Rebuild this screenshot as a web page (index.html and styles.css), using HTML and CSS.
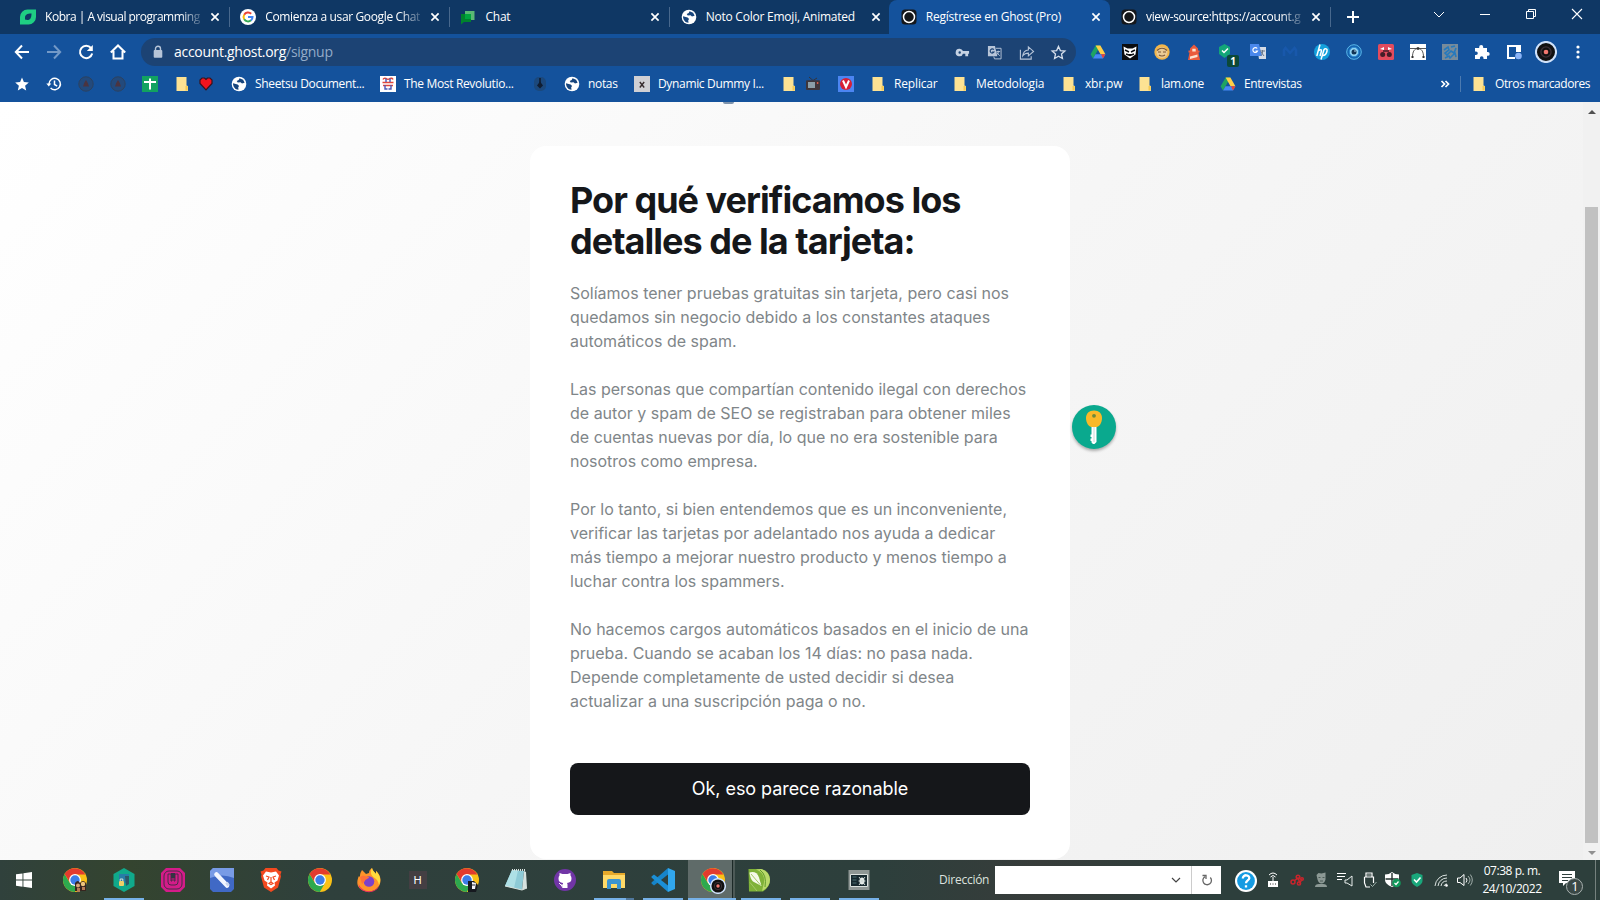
FILE: index.html
```html
<!DOCTYPE html>
<html lang="es">
<head>
<meta charset="utf-8">
<title>Regístrese en Ghost (Pro)</title>
<link rel="stylesheet" href="styles.css">
</head>
<body>
<svg class="defs" aria-hidden="true">
  <symbol id="close" viewBox="0 0 10 10"><path d="M1.4 1.4l7.2 7.2M8.6 1.4L1.4 8.6" stroke="#fff" stroke-width="1.7"/></symbol>
  <symbol id="globe" viewBox="0 0 16 16"><circle cx="8" cy="8" r="7.3" fill="#fff"/><path d="M2 7.2l4.6 1.2 1.5 1.5-.9 1.3.3 2.5c-3 .1-5.600-2.800-5.500-6.500zM8.500 2.200l3.600 1.500 1.500 3-2.600.8-1.500-1.200-2.800.2-1-1.500 2-1z" fill="#17457d"/></symbol>
  <symbol id="folder" viewBox="0 0 16 16"><path d="M2.500 1h10v8.500l1.500.5v5H2.500z" fill="#fde293"/><path d="M11.500 10v4.500h2.200V10z" fill="#f4c952"/></symbol>
  <symbol id="ghost" viewBox="0 0 16 16"><rect x=".5" y=".5" width="15" height="15" rx="3.500" fill="#15171a"/><circle cx="8" cy="8" r="5.500" fill="none" stroke="#fff" stroke-width="1.500"/></symbol>
  <symbol id="drive" viewBox="0 0 16 16"><path d="M5.600 1.500h4.800L5.500 10.200 3 14.500.6 10.300z" fill="#1ea362"/><path d="M5.600 1.500h4.800l5 8.700h-4.900z" fill="#ffcf48"/><path d="M5.500 10.200h9.900L13 14.500H3z" fill="#4688f4"/><path d="M11 10.200h4.400L13 14.500z" fill="#ea4335"/></symbol>
  <symbol id="chrome" viewBox="0 0 24 24"><circle cx="12" cy="12" r="12" fill="#fbc116"/><path d="M1.600 6l5.300 9L12 12l5 3-5.200 9A12 12 0 0 1 1.600 6z" fill="#2da94f"/><path d="M1.600 6A12 12 0 0 1 22.400 6.600H12L7 14.500z" fill="#e33b2e"/><circle cx="12" cy="12" r="5.900" fill="#fff"/><circle cx="12" cy="12" r="4.700" fill="#3c7de8"/></symbol>
  <symbol id="badge" viewBox="0 0 16 16"><circle cx="8" cy="8" r="7.300" fill="#111" stroke="#cfe2fb" stroke-width="1.500"/><circle cx="8" cy="8" r="3.700" fill="none" stroke="#3b3037"/><circle cx="8" cy="8" r="1.700" fill="#f2776f"/></symbol>
  <symbol id="camo" viewBox="0 0 16 16"><circle cx="8" cy="8" r="7.200" fill="#234a7c" stroke="#2c4260"/><path d="M8 4l1.800 3L11 10.500H5L6.200 7z" fill="#4b3440"/></symbol>
</svg>

<header class="browser">
  <div class="tabs">
    <div class="tab"><svg class="fav" viewBox="0 0 16 16"><path d="M0 15.500V8a7.500 7.500 0 0 1 7.500-7.500H16V8a7.500 7.500 0 0 1-7.500 7.500z" fill="#1fce83"/><path d="M5 10.500V8.500C5 6 7 4.500 11.500 4.500c0 4.500-1.500 6.500-4 6.500z" fill="#0f3764"/></svg><span class="title fade tight">Kobra | A visual programming</span><svg class="x"><use href="#close"/></svg></div>
    <div class="tab sep"><svg class="fav" viewBox="0 0 16 16"><circle cx="8" cy="8" r="8" fill="#fff"/><g fill="none" stroke-width="2"><path d="M4.200 5.800A4.500 4.500 0 0 1 11.200 4.800" stroke="#ea4335"/><path d="M4.200 10.300a4.500 4.500 0 0 1 0-4.600" stroke="#fbbc05"/><path d="M11 11.300a4.500 4.500 0 0 1-6.800-1" stroke="#34a853"/><path d="M8 8h4.500a4.500 4.500 0 0 1-1.500 3.400" stroke="#4285f4"/></g></svg><span class="title fade">Comienza a usar Google Chat</span><svg class="x"><use href="#close"/></svg></div>
    <div class="tab sep"><svg class="fav" viewBox="0 0 16 16"><path d="M5 2h9.500v9H5z" fill="#5bb974"/><path d="M1 5h10v8H4l-3 2.500z" fill="#00832d"/><path d="M5 5h6v5H5z" fill="#00a63e"/></svg><span class="title">Chat</span><svg class="x"><use href="#close"/></svg></div>
    <div class="tab sep"><svg class="fav"><use href="#globe"/></svg><span class="title">Noto Color Emoji, Animated</span><svg class="x"><use href="#close"/></svg></div>
    <div class="tab active"><svg class="fav"><use href="#ghost"/></svg><span class="title">Regístrese en Ghost (Pro)</span><svg class="x"><use href="#close"/></svg></div>
    <div class="tab"><svg class="fav"><use href="#ghost"/></svg><span class="title fade">view-source:https://account.g</span><svg class="x"><use href="#close"/></svg></div>
    <div class="newtab"><svg width="12" height="12" viewBox="0 0 12 12"><path d="M6 0v12M0 6h12" stroke="#fff" stroke-width="2"/></svg></div>
    <div class="winbtns">
      <svg viewBox="0 0 12 12"><path d="M1 4l5 5 5-5" fill="none" stroke="#fff"/></svg>
      <svg viewBox="0 0 12 12"><path d="M1 6.500h10" stroke="#fff"/></svg>
      <svg viewBox="0 0 12 12"><path d="M1.500 3.500h7v7h-7zM3.500 3V1.500h7v7H9" fill="none" stroke="#fff"/></svg>
      <svg viewBox="0 0 12 12"><path d="M1 1l10 10M11 1L1 11" stroke="#fff" stroke-width="1.100"/></svg>
    </div>
  </div>

  <div class="toolbar">
    <span class="cell"><svg viewBox="0 0 16 16"><path d="M15 8H2M8 1.500L1.800 8 8 14.500" fill="none" stroke="#fff" stroke-width="2"/></svg></span>
    <span class="cell"><svg viewBox="0 0 16 16"><path d="M1 8h13M8 1.500L14.200 8 8 14.500" fill="none" stroke="#7399c7" stroke-width="2"/></svg></span>
    <span class="cell"><svg viewBox="0 0 16 16"><path d="M13 4A6.200 6.200 0 1 0 14.200 9.500" fill="none" stroke="#fff" stroke-width="2"/><path d="M14.800 1v6H8.800z" fill="#fff"/></svg></span>
    <span class="cell"><svg viewBox="0 0 16 16"><path d="M.8 8.500L8 1.500l7.200 7M3.500 7v7.500h9V7" fill="none" stroke="#fff" stroke-width="2"/></svg></span>
    <div class="omnibox">
      <svg class="lock" viewBox="0 0 10 14"><path d="M2.500 6V3.800a2.500 2.500 0 0 1 5 0V6" fill="none" stroke="#b7c5d8" stroke-width="1.400"/><rect x=".7" y="5" width="8.600" height="7.800" rx="1" fill="#b7c5d8"/></svg>
      <span class="url">account.ghost.org<i>/signup</i></span>
      <div class="actions">
        <span class="cell"><svg viewBox="0 0 16 16"><path d="M5 4a4 4 0 1 0 3.500 5.200H11V12h3V9.200h1V6.500H8.500A4 4 0 0 0 5 4zm0 2.700a1.300 1.300 0 1 1 0 2.600 1.300 1.300 0 0 1 0-2.600z" fill="#c5d2e3" fill-rule="evenodd"/></svg></span>
        <span class="cell"><svg viewBox="0 0 16 16"><path d="M1 1h7.500l2.500 11H1z" fill="#b7c5d8"/><path d="M9.500 3.500h5.500v11.300H8l-.8-2.500" fill="none" stroke="#b7c5d8"/><path d="M10 7h4M12 6v1.500c0 2-1.500 3-2.500 3.500M10.500 8l3 3.500" fill="none" stroke="#b7c5d8"/><path d="M7.300 5A2.200 2.200 0 1 0 7.500 7.500H5.500" fill="none" stroke="#1c4374" stroke-width="1.200"/></svg></span>
        <span class="cell"><svg viewBox="0 0 16 16"><path d="M1.500 5v10h11.500v-3M4 11.500c.5-4 2.500-6 6-6.200V2l5.500 4.800L10 11.600V8.600c-2.500 0-4.500.9-6 2.900z" fill="none" stroke="#b7c5d8" stroke-width="1.200"/></svg></span>
        <span class="cell"><svg viewBox="0 0 16 16"><path d="M8 1.500l2 4.500 4.800.4-3.600 3.200 1 4.800L8 12l-4.200 2.400 1-4.800L1.200 6.400 6 6z" fill="none" stroke="#d5deeb" stroke-width="1.400"/></svg></span>
      </div>
    </div>
    <div class="exts">
      <span class="cell"><svg><use href="#drive"/></svg></span>
      <span class="cell"><svg viewBox="0 0 16 16"><path d="M0 0h16v16H0z" fill="#0a0c10"/><path d="M1.500 2.500l4 2h5l4-2-1 8L8 14.500 2.500 10.500z" fill="#fff"/><path d="M3 6l4 2M13 6L9 8M4 10l4 1.500L12 10" stroke="#0a0c10" stroke-width="1.500"/></svg></span>
      <span class="cell"><svg viewBox="0 0 16 16"><circle cx="8" cy="8" r="7.700" fill="#f3b64b"/><circle cx="8" cy="8.500" r="5.500" fill="#eacb96"/><path d="M3 6.500c3-3 7-3 10 0M4 8h3M9 8h3M5 11q3 2 6 0" fill="none" stroke="#7d5835" stroke-width="1.200"/></svg></span>
      <span class="cell"><svg viewBox="0 0 16 16"><path d="M4 4.500L8 .5l4 4v2h1.500v2h-1L14 16H2l1.500-7.500h-1v-2H4z" fill="#eb5b3c"/><path d="M6.300 4.800h3.400v2.700H6.300zM4 12.500l7.500-2V13l-7.500 2z" fill="#fde2d0"/></svg></span>
      <span class="cell ext-count"><svg viewBox="0 0 16 16"><path d="M6.500 0l5.500 3v7l-5.500 4L1 10V3z" fill="#13a678"/><path d="M4 6.500l2 2 4-4" fill="none" stroke="#fff" stroke-width="1.500"/></svg><b>1</b></span>
      <span class="cell"><svg viewBox="0 0 16 16"><path d="M7 3h9v12H9z" fill="#d5dbe5"/><path d="M0 0h9l3 12H0z" fill="#4a88ec"/><path d="M7.200 4.500A2.400 2.400 0 1 0 7.500 7H5.500" fill="none" stroke="#fff" stroke-width="1.200"/><path d="M10 7h5M12.500 6v2c0 2-1 3-2 4M11 8l3 4" stroke="#697789" fill="none"/></svg></span>
      <span class="cell"><svg viewBox="0 0 16 16"><path d="M2 12V6l1.500-2L8 9l4.500-5L14 6v6" fill="none" stroke="#1858ab" stroke-width="2.500"/></svg></span>
      <span class="cell"><svg viewBox="0 0 16 16"><circle cx="8" cy="8" r="8" fill="#14a0dc"/><path d="M6 .5L2.800 12M4.500 6.500q3.500-2 2.900.8L6 12M10.200 5L7 15.500M10.200 5q3.500-.8 2.800 2-.8 4.500-4.300 4.500" fill="none" stroke="#fff" stroke-width="1.500"/></svg></span>
      <span class="cell"><svg viewBox="0 0 16 16"><circle cx="8" cy="8" r="7.300" fill="#1563b0" stroke="#5ab8ea"/><circle cx="8" cy="8" r="4.700" fill="#8fd3f5" stroke="#2b8bd2"/><circle cx="8" cy="8" r="2.500" fill="#123455"/><circle cx="9" cy="7" r=".8" fill="#cbeaff"/></svg></span>
      <span class="cell"><svg viewBox="0 0 16 16"><rect width="16" height="16" rx="1.500" fill="#e24b5d"/><circle cx="4.700" cy="10.500" r="2.500" fill="#431d28"/><circle cx="11.300" cy="10.500" r="2.500" fill="#431d28"/><path d="M2 5l4-2v3zM14 5l-4-2v3z" fill="#fff"/><path d="M5 7h6" stroke="#431d28" stroke-width="1.500"/></svg></span>
      <span class="cell"><svg viewBox="0 0 16 16"><path d="M0 0h16v16H0z" fill="#fff"/><path d="M0 4.500h16M2.500 13c0-5.500 2-8.500 5.500-8.500s5.500 3 5.500 8.500" fill="none" stroke="#444" stroke-width=".9"/><path d="M6.800 3.300h2.400v2.400H6.800zM1.500 12h2v2h-2zM12.500 12h2v2h-2z" fill="#333"/></svg></span>
      <span class="cell"><svg viewBox="0 0 16 16"><path d="M0 0h16v16H0z" fill="#778b9b"/><path d="M2 6l4-3 1 3-4 3 2 2 4-4 3 2 2-5M3 14l4-2 1 2 5-5 1 4M9 3l4-1" fill="none" stroke="#2579bd" stroke-width="1.600"/></svg></span>
      <span class="cell"><svg viewBox="0 0 16 16"><path d="M1 4h4.200V3a2 2 0 0 1 4 0v1H13v4h.8a1.900 1.900 0 0 1 0 3.800H13V15H9.500v-1a1.800 1.800 0 0 0-3.600 0v1H1v-4h1a1.800 1.800 0 0 0 0-3.600H1z" fill="#fff"/></svg></span>
      <span class="cell"><svg viewBox="0 0 16 16"><path d="M14 8V2H2v12h7" fill="none" stroke="#fff" stroke-width="2"/><path d="M10 2h4v6h-4z" fill="#fff"/><circle cx="12.500" cy="12" r="3.300" fill="#8ab4f8"/></svg></span>
      <span class="cell"><svg class="s22"><use href="#badge"/></svg></span>
      <span class="cell"><svg viewBox="0 0 16 16"><g fill="#fff"><circle cx="8" cy="3" r="1.600"/><circle cx="8" cy="8" r="1.600"/><circle cx="8" cy="13" r="1.600"/></g></svg></span>
    </div>
  </div>

  <nav class="bookmarks">
    <a class="w32"><svg viewBox="0 0 16 16"><path d="M8 1.500l1.900 4.600 4.900.4-3.700 3.200 1.100 4.800L8 11.900l-4.200 2.600 1.100-4.800L1.200 6.500l4.900-.4z" fill="#fff"/></svg></a>
    <a class="w32"><svg viewBox="0 0 16 16"><path d="M3 8a5.700 5.700 0 1 1 1.600 4M8.500 4.500V8.500l2.700 1.600" fill="none" stroke="#fff" stroke-width="1.500"/><path d="M.3 7.500h5L2.800 10.500z" fill="#fff"/></svg></a>
    <a class="w32"><svg><use href="#camo"/></svg></a>
    <a class="w32"><svg><use href="#camo"/></svg></a>
    <a class="w32"><svg viewBox="0 0 16 16"><path d="M0 0h16v16H0z" fill="#12a260"/><path d="M8 2.500v11M2 6h12" stroke="#fff" stroke-width="2"/></svg></a>
    <a class="w24"><svg><use href="#folder"/></svg></a>
    <a class="w33"><svg viewBox="0 0 16 16"><path d="M8 13.800L2 7.500V4l2-2h2.500L8 3.500 9.500 2H12l2 2v3.500z" fill="#f0141e" stroke="#39141d" stroke-width="1.200"/></svg></a>
    <a class="w149"><svg><use href="#globe"/></svg>Sheetsu Document...</a>
    <a class="w152"><svg viewBox="0 0 16 16"><path d="M0 0h16v16H0z" fill="#fff"/><path d="M3 3.500q1-2 3-1 2 1.500 4 0 2-1 3 1M2.500 6.500h11M3 9.500h10" fill="none" stroke="#e0473c" stroke-width="1.500"/><path d="M6 2.500v3.500M10 2.500v3.500M5 9v4h2.500M11 9v4H8.500" fill="none" stroke="#4b55b5" stroke-width="1.400"/></svg>The Most Revolutio...</a>
    <a class="w32"><svg viewBox="0 0 16 16"><rect x="2" y="1" width="12" height="14" rx="5" fill="#1b487c"/><path d="M8 2v8" stroke="#101d31" stroke-width="1.600"/><path d="M5 9.500l3-4 3 4-3 3z" fill="#101d31"/></svg></a>
    <a class="w70"><svg><use href="#globe"/></svg>notas</a>
    <a class="w147"><svg viewBox="0 0 16 16"><path d="M0 0h16v16H0z" fill="#d0d0d4"/><path d="M5.800 6l4.400 5.500M10.200 6l-4.400 5.500" stroke="#362b2d" stroke-width="1.400"/></svg>Dynamic Dummy I...</a>
    <a class="w24"><svg><use href="#folder"/></svg></a>
    <a class="w33"><svg viewBox="0 0 16 16"><path d="M4 1l4 3.500L12 2" fill="none" stroke="#36343b"/><rect x="1" y="4.300" width="14" height="9.700" rx="1" fill="#3e363b"/><path d="M3 6h7v6H3z" fill="#8b9ea8"/><circle cx="12.600" cy="7" r=".9" fill="#e35f4c"/></svg></a>
    <a class="w32"><svg viewBox="0 0 16 16"><path d="M0 0h16v16H0z" fill="#4c85f2"/><circle cx="8" cy="8" r="6" fill="#d71f34"/><path d="M5 4.500L8 11l3-6.500" fill="none" stroke="#fff" stroke-width="2"/></svg></a>
    <a class="w82"><svg><use href="#folder"/></svg>Replicar</a>
    <a class="w109"><svg><use href="#folder"/></svg>Metodologia</a>
    <a class="w76"><svg><use href="#folder"/></svg>xbr.pw</a>
    <a class="w83"><svg><use href="#folder"/></svg>lam.one</a>
    <a class="w83"><svg><use href="#drive"/></svg>Entrevistas</a>
    <span class="more"><svg viewBox="0 0 16 16"><path d="M4.500 5l3 3-3 3M8.500 5l3 3-3 3" fill="none" stroke="#fff" stroke-width="1.700"/></svg></span>
    <a class="others"><svg><use href="#folder"/></svg>Otros marcadores</a>
  </nav>
</header>

<main class="page">
  <div class="remnant"></div>
  <section class="card">
    <h1>Por qué verificamos los<br>detalles de la tarjeta:</h1>
    <p>Solíamos tener pruebas gratuitas sin tarjeta, pero casi nos<br>quedamos sin negocio debido a los constantes ataques<br>automáticos de spam.</p>
    <p>Las personas que compartían contenido ilegal con derechos<br>de autor y spam de SEO se registraban para obtener miles<br>de cuentas nuevas por día, lo que no era sostenible para<br>nosotros como empresa.</p>
    <p>Por lo tanto, si bien entendemos que es un inconveniente,<br>verificar las tarjetas por adelantado nos ayuda a dedicar<br>más tiempo a mejorar nuestro producto y menos tiempo a<br>luchar contra los spammers.</p>
    <p>No hacemos cargos automáticos basados en el inicio de una<br>prueba. Cuando se acaban los 14 días: no pasa nada.<br>Depende completamente de usted decidir si desea<br>actualizar a una suscripción paga o no.</p>
    <button>Ok, eso parece razonable</button>
  </section>
  <div class="keybtn"><svg width="44" height="44" viewBox="0 0 44 44"><path d="M19.500 20h5v17l-2 2h-1.500l-1.500-1.500V36h-1v-2.500h1V32h-1v-2.500h1z" fill="#fff"/><path d="M22 22v15" stroke="#c6dad8"/><path d="M22 5.500c5 0 8 3 8 7.500 0 5-3 9-5.500 9h-5c-2.500 0-5.500-4-5.500-9 0-4.500 3-7.500 8-7.500z" fill="#f9b928"/><circle cx="22" cy="10.800" r="1.900" fill="#6b8a3c"/></svg></div>
  <div class="scroll"><i class="up"></i><div class="thumb"></div><i class="down"></i></div>
</main>

<footer class="taskbar">
  <div class="start"><svg width="16" height="16" viewBox="0 0 16 16"><path d="M0 2.300L6.500 1.400V7.600H0zM7.400 1.300L16 0v7.600H7.400zM0 8.500h6.500v6.200L0 13.800zM7.400 8.500H16V16l-8.600-1.200z" fill="#fff"/></svg></div>
  <div class="apps">
    <div class="app"><svg viewBox="0 0 24 24"><use href="#chrome"/><path d="M12 15q3-4 5 0 3-4 6 0v8H12z" fill="#37251f"/><circle cx="15" cy="17.500" r="2" fill="#dba477"/><circle cx="20" cy="16" r="2.200" fill="#efc67d"/><path d="M14 20h3v4h-3zM19 19h3v3h-3z" fill="#b57b55"/></svg></div>
    <div class="app open"><svg viewBox="0 0 24 24"><path d="M12 0l10.500 6v12L12 24 1.500 18V6z" fill="#10a98b"/><path d="M7 6h10v9H7z" fill="#277ca7"/><path d="M13 8h4v8l-3 2z" fill="#2d5668"/><rect x="7" y="13" width="5" height="5" rx="1" fill="#f0cf69"/><path d="M8.200 13v-2h2.600v2" fill="none" stroke="#d9e4da"/></svg></div>
    <div class="app"><svg viewBox="0 0 24 24"><path d="M5 0h14l5 5v14l-5 5H5l-5-5V5z" fill="#d41c89"/><g fill="none" stroke="#4a2b48" stroke-width="1"><rect x="3" y="3" width="18" height="18" rx="5"/><path d="M7 6v8q0 3 3 3h4q3 0 3-3V6h-3v7h-1V6h-2v7h-1V6z"/></g><path d="M10 5h4v5h-4z" fill="#343443"/></svg></div>
    <div class="app"><svg viewBox="0 0 24 24"><path d="M0 3l3-3h21v21l-3 3H3l-3-3z" fill="#4069c5"/><path d="M0 3l3-3h21v10q-12-5-24 0z" fill="#789be6"/><path d="M6.500 6.500l10.500 11" stroke="#f2f6ff" stroke-width="4.600" stroke-linecap="round"/><path d="M16.500 14.500l2 3" stroke="#c8d5ee" stroke-width="3"/></svg></div>
    <div class="app"><svg viewBox="0 0 24 24"><path d="M6.500 0h11l2 2.500 3 1-1 3 .5 2-3 11L12 24l-7-4.500-3-11 .5-2-1-3 3-1z" fill="#f4491f"/><path d="M12 4.500l5-1 3 4-1.500 5-3 2 .5 3-4 3-4-3 .5-3-3-2L4 7.500l3-4z" fill="#fff"/><path d="M7 8l3 1-1.500 3M17 8l-3 1 1.500 3M12 9v5l-2 1.500 2 1 2-1-2-1.500" fill="none" stroke="#f4491f" stroke-width="1.200"/></svg></div>
    <div class="app"><svg><use href="#chrome"/></svg></div>
    <div class="app"><svg viewBox="0 0 24 24"><path d="M5 2l4 4 3-1c0-3 2-4 3-5 .5 3 3 4 4 6V3c6 5 5 12 3 15-5 8-17 7-21 0C-1 13 2 8 2 8l1 1c0-4 1-5 2-7z" fill="#ff9429"/><path d="M15 0c.5 3 3 4 4 6V3c5 5 5 10 3 14-1-8-8-7-8-12 0-2 0-4 1-5z" fill="#ffdc3d"/><path d="M1 12c0 12 15 15 21 6-3 8-16 8-20 1z" fill="#ed2d63"/><circle cx="12" cy="13.500" r="5.300" fill="#7b42c9"/><path d="M3 9c4-3 6 0 9 0 0 2-4 2-4 4l-3 3z" fill="#ff7138"/></svg></div>
    <div class="app"><span class="hbox">H</span></div>
    <div class="app"><svg viewBox="0 0 24 24"><use href="#chrome"/><path d="M13 13h6l4 4-2 7h-8z" fill="#16191f"/><path d="M17 14l4 1-1 6h-3z" fill="#f1f2f6"/><path d="M17 17h3" stroke="#242833"/></svg></div>
    <div class="app"><svg viewBox="0 0 24 24"><path d="M8 2l12 1-2 19L1 18z" fill="#8ecbd7"/><path d="M8 2l6 .5L10 20l-9-2z" fill="#aee0e6"/><path d="M20 3l2 1 1 16-5 2z" fill="#d7e2df"/><path d="M1 18l17 4 5-2" fill="none" stroke="#d8e2dd"/><path d="M8 2h13" stroke="#d7e2df" stroke-width="2" stroke-dasharray="1 1"/></svg></div>
    <div class="app"><svg viewBox="0 0 24 24"><circle cx="12" cy="12" r="11" fill="#7135a6"/><path d="M9.500 20v-3c-2 0-2.500-.5-3-2M14.500 20v-3.500q0-1-.5-1.500c3-.3 4.500-1.500 4.500-4.500q0-2-1-3V5l-3 1h-5l-3-1v2.500q-1 1-1 3c0 3 1.500 4.200 4.500 4.500l-.5 5z" fill="#fff"/><path d="M6 15l2 2h2" fill="none" stroke="#fff"/></svg></div>
    <div class="app open stacked"><svg viewBox="0 0 24 24"><path d="M1 3h9l2 2h11v15H1z" fill="#e7a92b"/><path d="M1 7h22v13H1z" fill="#ffd967"/><path d="M5 21v-8q0-2 2-2h10q2 0 2 2v8h-4v-5H9v5z" fill="#3c94d1"/></svg></div>
    <div class="app open"><svg viewBox="0 0 24 24"><path d="M17 0v6.500L3 17.500.500 15.500v-1z" fill="#1684c9"/><path d="M17 24v-6.500L3 6.500.5 8.500v1z" fill="#1b8fd6"/><path d="M17 0l7 3v18l-7 3z" fill="#31a7ed"/></svg></div>
    <div class="app current"><svg viewBox="0 0 24 24"><use href="#chrome"/><use href="#badge" x="9" y="10" width="16" height="16"/></svg></div>
    <div class="app open corel"><svg viewBox="0 0 24 24"><path d="M1.500 1H14q9 2 9 11 0 7-7 11.500H2z" fill="#7fb238"/><path d="M9 1.500q9 3 8 13l-2 8.500Q23 19 23 11.500 22 3 14 1z" fill="#b9d96b"/><path d="M13 2q7 5 5 17" fill="none" stroke="#5f9a2a"/><path d="M2.500 4.500q7-2 9.500 5l2.500 8.500-8.500-4.500q-3-3-3.500-9z" fill="#f5f9e9"/><path d="M4 6l9.500 11M3 14.500L10 23" stroke="#a4c964"/></svg></div>
    <div class="app open"></div>
    <div class="app open"><svg viewBox="0 0 24 24"><path d="M1.500 2h21v20h-21z" fill="#8f9795"/><path d="M3.500 6.500h17v12h-17z" fill="#17292f" stroke="#dce2df"/><ellipse cx="15" cy="13" rx="2.500" ry="3.500" fill="#e7ecea"/><path d="M12 9l6 8M18 9l-6 8M11.500 13h7" stroke="#d1dad7"/><path d="M5.500 9h4M5.500 12h4M5.500 15h4" stroke="#4e7074"/></svg></div>
  </div>
  <span class="addrlabel">Dirección</span>
  <div class="addr">
    <svg class="chev" width="12" height="12" viewBox="0 0 12 12"><path d="M2 4l4 4 4-4" fill="none" stroke="#444" stroke-width="1.200"/></svg>
    <span class="refresh"><svg width="12" height="12" viewBox="0 0 12 12"><path d="M9.300 3.500A4.300 4.300 0 1 1 4 2.700M1.500 1.500H5V5" fill="none" stroke="#666" stroke-width="1.300"/></svg></span>
  </div>
  <svg class="help" viewBox="0 0 24 24"><circle cx="12" cy="12" r="11" fill="#fff"/><circle cx="12" cy="12" r="8.900" fill="#159be2"/><path d="M8.800 9.500c0-4.500 6.800-4 6.500-.3-.2 2.300-3.300 2.300-3.300 5M12 16.200v2.300" fill="none" stroke="#fff" stroke-width="2.300"/></svg>
  <div class="tray">
    <svg viewBox="0 0 16 16"><path d="M3 9h10v6H3z" fill="#fff"/><path d="M8 5v4M5.500 5q2.500-3 5 0M4 3q4-4 8 0" fill="none" stroke="#fff"/><path d="M5 12h1M7.500 12h1M10 12h1" stroke="#333"/></svg>
    <svg viewBox="0 0 16 16"><g fill="none" stroke="#c9252c" stroke-width="1.500"><circle cx="4" cy="10" r="2"/><circle cx="9" cy="5" r="1.800"/><circle cx="13" cy="7" r="1.300"/><circle cx="10" cy="11.500" r="1.600"/><path d="M5 9l4-3 2 5 2-4"/></g></svg>
    <svg viewBox="0 0 16 16"><path d="M3.500 3l2-2 3 .5 4-1v7q-1 4-4 4t-4-4zM2 15q0-3 4-3h4q4 0 4 3z" fill="#8c9995"/><path d="M5.500 5.500h2M9.500 5.500h2M7 9h3" stroke="#4d5c58"/></svg>
    <svg viewBox="0 0 16 16"><path d="M0 1.500h9M0 4.500h8M0 7.500h5" stroke="#fff" stroke-width="1.200"/><path d="M8 8h2l5-4v10l-5-3H8z" fill="none" stroke="#e8eeec"/></svg>
    <svg viewBox="0 0 16 16"><path d="M5 5V1h6v4M3.500 5h9v6M3.500 5v6l1.500 4h4M7 2.500v1M9 2.500v1" fill="none" stroke="#fff" stroke-width="1.200"/><path d="M9.500 12.500l2 2 4-4.500" fill="none" stroke="#9eb3ac"/></svg>
    <svg viewBox="0 0 16 16"><path d="M7 0q3 2.500 7 2.500v5.500q0 4-7 7-7-3-7-7V2.500Q4 2.500 7 0z" fill="#fff"/><path d="M7 1v13M.5 7h13" stroke="#24332f" stroke-width="1.400"/><circle cx="11.500" cy="11" r="4.300" fill="#12985a"/><path d="M9.500 11l1.500 1.500 2.500-3" fill="none" stroke="#fff" stroke-width="1.200"/></svg>
    <svg viewBox="0 0 16 16"><path d="M8 1l5.500 2v6q0 3-5.500 6-5.500-3-5.500-6V3z" fill="#19a77b"/><path d="M5 7.500L7.500 10 11.500 5.500" fill="none" stroke="#fff" stroke-width="1.600"/></svg>
    <svg viewBox="0 0 16 16"><g fill="none" stroke="#dbe3e0"><path d="M2 14A12 12 0 0 1 14 3M5 14a9 9 0 0 1 9-8M8 14a6 6 0 0 1 6-5M11 14a3 3 0 0 1 3-2"/></g><circle cx="13.500" cy="13.500" r="1.300" fill="#fff"/></svg>
    <svg viewBox="0 0 16 16"><path d="M.5 6h2.500L7 2.500v11L3 10.500H.5zM9 6q2 2 0 4.500" fill="none" stroke="#fff"/><path d="M11 4q4 4 0 8M13.300 2.500q4 5.500 0 11" fill="none" stroke="#a2afab"/></svg>
  </div>
  <div class="clock"><span>07:38 p. m.</span><span>24/10/2022</span></div>
  <div class="notif"><svg width="26" height="26" viewBox="0 0 26 26"><path d="M1 2h16v12H8l-3 3v-3H1z" fill="#fff"/><path d="M4 5.500h10M4 8.500h10M4 11.500h6" stroke="#2f403d"/><circle cx="16.500" cy="17.500" r="8" fill="#3a4846" stroke="#a8b1af"/></svg><b>1</b></div>
</footer>
</body>
</html>
```

FILE: styles.css
```css
* { box-sizing: border-box; }
body { margin: 0; width: 1600px; height: 900px; overflow: hidden; display: flex; flex-direction: column; font: 12px/16px "Open Sans", "Noto Sans", sans-serif; color: #fff; }
.defs { position: absolute; width: 0; height: 0; }
svg { flex: none; display: block; overflow: visible; }

/* Browser chrome */
.browser { height: 102px; flex: none; background: #14529c; }
.tabs { height: 34px; display: flex; background: #0f3764; padding-left: 8.600px; }
.tab { width: 220.200px; flex: none; display: flex; align-items: center; padding: 0 0 0 11.500px; }
.tab.sep { background: linear-gradient(#48688d, #48688d) 0 50% / 1px 20px no-repeat; }
.tab.active { background: #14529c; border-radius: 8px 8px 0 0; }
.fav { width: 16px; height: 16px; margin-right: 9px; }
.title { width: 160px; flex: none; white-space: nowrap; letter-spacing: -.23px; }
.fade { width: 157px; margin-right: 3px; letter-spacing: -.36px; mask-image: linear-gradient(90deg, #000 86%, rgba(0, 0, 0, .15)); }
.tight { letter-spacing: -.5px; }
.x { width: 10px; height: 10px; margin-left: 5px; }
.newtab { width: 46px; display: flex; align-items: center; justify-content: center; background: linear-gradient(#48688d, #48688d) 0 50% / 1px 20px no-repeat; }
.winbtns { margin-left: auto; display: flex; align-items: center; height: 28px; gap: 34px; padding-right: 17px; }
.winbtns svg { width: 12px; height: 12px; }
.toolbar { height: 36px; display: flex; align-items: center; padding-left: 6px; }
.cell { width: 32px; height: 28px; flex: none; display: flex; align-items: center; justify-content: center; }
.cell svg { width: 16px; height: 16px; }
.cell .s22 { width: 22px; height: 22px; }
.omnibox { width: 935px; height: 28px; flex: none; margin: 0 6px 0 7px; border-radius: 14px; background: #1c4374; display: flex; align-items: center; padding: 0 2px 0 12px; }
.actions .cell svg { width: 15px; height: 15px; }
.lock { width: 10px; height: 14px; margin-right: 11px; }
.url { font-size: 14px; letter-spacing: -.3px; }
.url i { font-style: normal; color: #93abc8; }
.actions { margin-left: auto; display: flex; }
.exts { display: flex; }
.ext-count { position: relative; }
.ext-count b { position: absolute; right: 3px; bottom: -1px; width: 12px; height: 12px; border-radius: 2px; background: #0b4938; font-size: 10px; line-height: 12px; text-align: center; }
.bookmarks { height: 28px; display: flex; align-items: center; padding-left: 14px; }
.bookmarks a { flex: none; display: flex; align-items: center; gap: 8px; white-space: nowrap; letter-spacing: -.34px; }
.bookmarks svg { width: 16px; height: 16px; }
.w24 { width: 24px; }
.w32 { width: 32px; }
.w33 { width: 33px; }
.w70 { width: 70px; }
.w76 { width: 76px; }
.w82 { width: 82px; }
.w83 { width: 83px; }
.w109 { width: 109px; }
.bookmarks .w82, .bookmarks .w109, .bookmarks .w76 { letter-spacing: -.16px; }
.w147 { width: 147px; }
.w149 { width: 149px; }
.w152 { width: 152px; }
.more { margin-left: auto; padding-right: 7px; border-right: 1px solid #4c7ab0; }
.bookmarks .others { width: 139px; padding-left: 10px; letter-spacing: -.4px; }

/* Page */
.page { height: 758px; flex: none; display: flex; justify-content: center; position: relative; padding-top: 44px; background: linear-gradient(135deg, #fff 0%, #f6f6f6 50%, #efefef 100%); }
.remnant { position: absolute; left: 723px; top: 0; width: 11px; height: 2px; border-radius: 0 0 6px 6px; background: #7e93ac; }
.card { width: 540px; height: 713px; border-radius: 16px; background: #fff; padding: 34px 40px 0; font-family: Inter, sans-serif; }
h1 { margin: 0 0 19px; font-size: 36px; line-height: 41px; font-weight: 700; letter-spacing: -.97px; color: #15171a; white-space: nowrap; }
p { margin: 0 0 24px; font-size: 16px; line-height: 24px; font-weight: 400; color: #7f8689; white-space: nowrap; }
button { display: block; width: 460px; height: 52px; margin-top: 50px; border: 0; border-radius: 8px; background: #15171a; color: #fff; font: 400 18px/52px Inter, sans-serif; letter-spacing: -.06px; padding: 0; }
.keybtn { position: absolute; left: 1072px; top: 303px; width: 44px; height: 44px; border-radius: 50%; background: #0aa98e; box-shadow: 0 2px 3px rgba(0, 0, 0, .3); }
.scroll { position: absolute; right: 0; top: 0; width: 17px; height: 758px; background: #f1f1f1; display: flex; flex-direction: column; align-items: center; justify-content: space-between; padding: 8px 0 5px; }
.thumb { width: 13px; height: 636px; margin-top: 84px; background: #c1c1c1; }
.up { border: 4px solid transparent; border-top: 0; border-bottom: 4px solid #505050; }
.down { border: 4px solid transparent; border-bottom: 0; border-top: 4px solid #909090; }

/* Taskbar */
.taskbar { height: 40px; flex: none; display: flex; align-items: center; background: linear-gradient(90deg, #30413c, #34442f 8%, #2f403c 20%, #2d3f3c 55%, #373c3a 65%, #2d3f3c 76%); }
.start { width: 50px; flex: none; display: flex; justify-content: center; padding-right: 2px; }
.apps { display: flex; flex: none; height: 40px; }
.app { width: 49px; flex: none; display: flex; align-items: center; justify-content: center; }
.app svg { width: 24px; height: 24px; }
.open { background: linear-gradient(#76b1e8, #76b1e8) 50% 100% / 40px 2px no-repeat; }
.stacked { background: linear-gradient(90deg, #76b1e8 80%, #50789d 80%) 50% 100% / 40px 2px no-repeat; }
.current { padding-left: 2px; background: linear-gradient(#76b1e8, #76b1e8) 1px 100% / 48px 2px no-repeat, linear-gradient(90deg, #5f6b69 44px, #1c2927 44px 45px, #4d5a57 45px) 1px 0 / 47px 40px no-repeat; }
.corel { padding-right: 4px; }
.hbox { width: 18px; height: 18px; background: #443f43; font: 11px/18px Inter, sans-serif; text-align: center; }
.addrlabel { width: 56px; margin-left: 56px; flex: none; color: #dce2df; letter-spacing: -.25px; }
.addr { width: 226px; height: 28px; flex: none; background: #fff; display: flex; align-items: center; justify-content: flex-end; }
.chev { margin-right: 9px; }
.refresh { width: 30px; height: 28px; border-left: 1px solid #ccc; display: flex; align-items: center; justify-content: center; }
.help { width: 24px; height: 24px; margin: 2px 7px 0 13px; }
.tray { display: flex; gap: 8px; flex: none; }
.tray svg { width: 16px; height: 16px; }
.clock { width: 70px; margin-left: 4px; flex: none; display: flex; flex-direction: column; text-align: center; line-height: 18px; padding-bottom: 1px; letter-spacing: -.45px; }
.notif { position: relative; margin-left: 11px; width: 38px; height: 40px; padding-top: 9px; border-right: 1px solid #75817e; }
.notif b { position: absolute; left: 12px; top: 18px; width: 10px; font: 13px/17px "Open Sans", sans-serif; text-align: center; }
```
